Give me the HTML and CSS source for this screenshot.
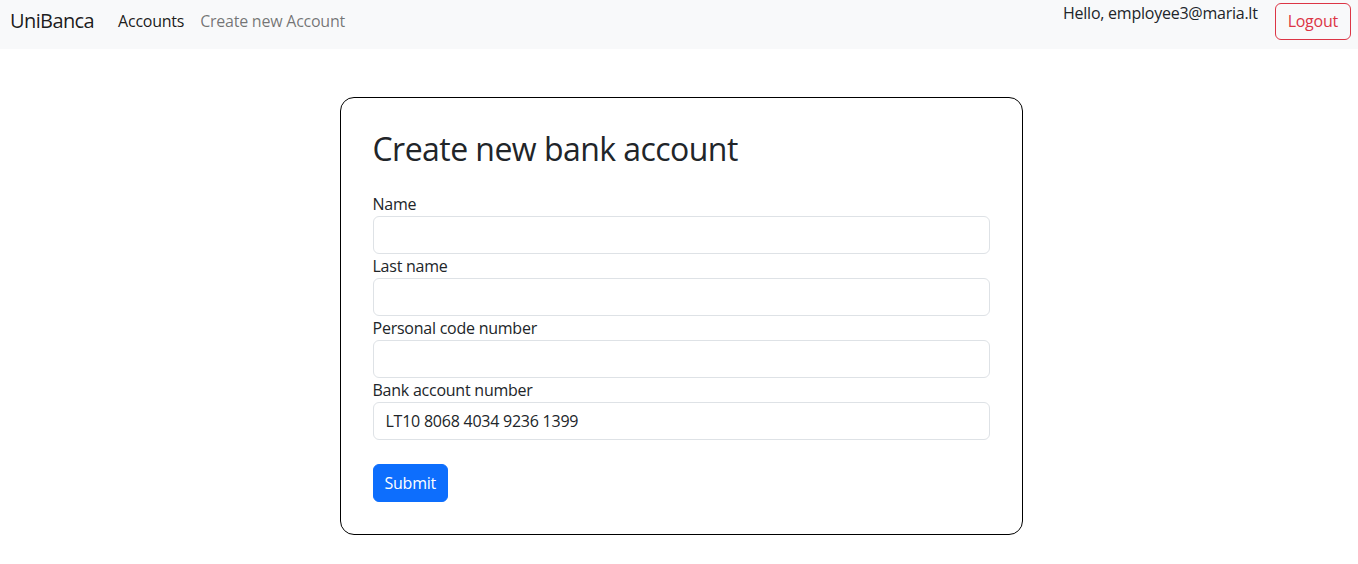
FILE: index.html
```html
<!DOCTYPE html>
<html lang="en">
<head>
<meta charset="utf-8">
<title>UniBanca</title>
<link rel="stylesheet" href="styles.css">
</head>
<body>
<nav class="navbar">
  <div class="nav-left">
    <a class="brand" href="#">UniBanca</a>
    <a class="nav-link active" href="#">Accounts</a>
    <a class="nav-link" href="#">Create new Account</a>
  </div>
  <div class="nav-right">
    <span class="hello">Hello, employee3@maria.lt</span>
    <button class="btn-logout" type="button">Logout</button>
  </div>
</nav>
<main class="main">
  <div class="card">
    <h2 class="title">Create new bank account</h2>
    <form class="form">
      <label class="label" for="name">Name</label>
      <input class="input" id="name" type="text">
      <label class="label" for="lastname">Last name</label>
      <input class="input" id="lastname" type="text">
      <label class="label" for="code">Personal code number</label>
      <input class="input" id="code" type="text">
      <label class="label" for="acc">Bank account number</label>
      <input class="input" id="acc" type="text" value="LT10 8068 4034 9236 1399">
      <button class="btn-submit" type="submit">Submit</button>
    </form>
  </div>
</main>
</body>
</html>
```
FILE: styles.css
```css
* { box-sizing: border-box; }
html, body { margin: 0; padding: 0; }
body {
  font-family: "Open Sans", "Noto Sans", sans-serif;
  font-size: 16px;
  line-height: 1.5;
  letter-spacing: -0.015em;
  color: #212529;
  background: #fff;
}
.navbar {
  height: 49px;
  background: #f8f9fa;
  display: flex;
  justify-content: space-between;
  align-items: flex-start;
  padding: 0 7px 0 10px;
}
.nav-left {
  display: flex;
  align-items: center;
  height: 42px;
}
.brand {
  font-size: 20px;
  letter-spacing: -0.03em;
  color: rgba(0,0,0,0.9);
  text-decoration: none;
  margin-right: 16px;
}
.nav-link {
  color: rgba(0,0,0,0.55);
  text-decoration: none;
  padding: 8px 8px;
}
.nav-link.active { color: rgba(0,0,0,0.9); }
.nav-right {
  display: flex;
  align-items: flex-start;
  gap: 17px;
}
.hello {
  padding-top: 1px;
  color: #212529;
}
.btn-logout {
  margin-top: 3px;
  font: inherit;
  letter-spacing: inherit;
  color: #dc3545;
  background: transparent;
  border: 1px solid #dc3545;
  border-radius: 6px;
  padding: 4px 12px 6px;
  height: 37px;
  line-height: 1.5;
}
.main {
  padding: 48px 0 0 4px;
  display: flex;
  justify-content: center;
}
.card {
  width: 683px;
  border: 1px solid #000;
  border-radius: 14px;
  padding: 32px;
}
.title {
  margin: 0 0 24px;
  font-size: 32px;
  font-weight: 400;
  line-height: 1.2;
  letter-spacing: -0.017em;
}
.form {
  display: flex;
  flex-direction: column;
  align-items: flex-start;
}
.label {
  display: block;
  line-height: 24px;
}
.input {
  width: 100%;
  height: 38px;
  font: inherit;
  letter-spacing: inherit;
  color: #212529;
  padding: 6px 12px;
  border: 1px solid #dee2e6;
  border-radius: 6px;
  background: #fff;
}
.btn-submit {
  margin-top: 24px;
  font: inherit;
  letter-spacing: inherit;
  color: #fff;
  background: #0d6efd;
  border: 1px solid #0d6efd;
  border-radius: 6px;
  padding: 6px 11px;
  height: 38px;
}
```
